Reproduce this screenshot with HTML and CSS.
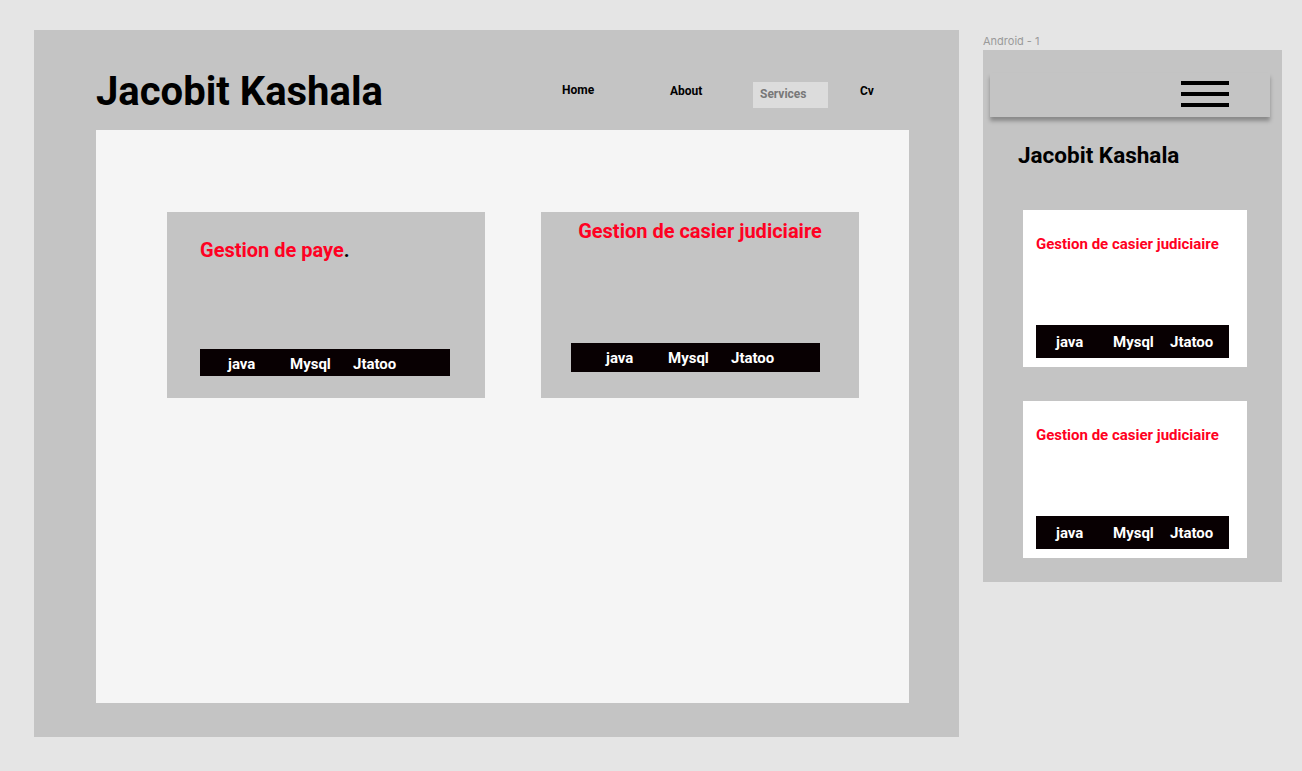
FILE: index.html
```html
<!DOCTYPE html>
<html>

<head lang="fr">
    <meta charset="UTF-8">
    <title>Jacobit Kashala</title>
    <link rel="stylesheet" href="styles.css">
</head>

<body>
    <div class="desktop">
        <header class="header">
            <h1 class="title">Jacobit Kashala</h1>
            <nav class="nav">
                <a class="nav-home" href="#">Home</a>
                <a class="nav-about" href="#">About</a>
                <a class="nav-services" href="#">Services</a>
                <a class="nav-cv" href="#">Cv</a>
            </nav>
        </header>
        <div class="panel">
            <div class="card card-left">
                <h2 class="card-title"><span class="red">Gestion de paye</span>.</h2>
                <div class="tags">
                    <span class="tag-java">java</span>
                    <span class="tag-mysql">Mysql</span>
                    <span>Jtatoo</span>
                </div>
            </div>
            <div class="card card-right">
                <h2 class="card-title"><span class="red">Gestion de casier judiciaire</span></h2>
                <div class="tags">
                    <span class="tag-java">java</span>
                    <span class="tag-mysql">Mysql</span>
                    <span>Jtatoo</span>
                </div>
            </div>
        </div>
    </div>

    <div class="android">
        <p class="frame-label">Android - 1</p>
        <div class="phone">
            <div class="appbar">
                <div class="burger">
                    <span></span>
                    <span></span>
                    <span></span>
                </div>
            </div>
            <h1 class="phone-title">Jacobit Kashala</h1>
            <div class="m-card">
                <h2 class="m-card-title">Gestion de casier judiciaire</h2>
                <div class="m-tags">
                    <span class="m-tag">java</span>
                    <span class="m-tag">Mysql</span>
                    <span>Jtatoo</span>
                </div>
            </div>
            <div class="m-card">
                <h2 class="m-card-title">Gestion de casier judiciaire</h2>
                <div class="m-tags">
                    <span class="m-tag">java</span>
                    <span class="m-tag">Mysql</span>
                    <span>Jtatoo</span>
                </div>
            </div>
        </div>
    </div>
</body>

</html>
```

FILE: styles.css
```css
body {
    margin: 0;
    padding: 30px 0 0 34px;
    background-color: #e5e5e5;
    font-family: Roboto, "Liberation Sans", sans-serif;
    display: flex;
    align-items: flex-start;
}

h1,
h2,
p {
    margin: 0;
}

a {
    text-decoration: none;
    color: #000;
}

/* desktop frame */

.desktop {
    width: 925px;
    height: 707px;
    box-sizing: border-box;
    padding: 0 50px 34px 62px;
    background-color: #c4c4c4;
    display: flex;
    flex-direction: column;
}

.header {
    height: 100px;
    display: flex;
    align-items: flex-start;
}

.title {
    margin-top: 42px;
    font-size: 40px;
    line-height: 40px;
    font-weight: 700;
    color: #000;
}

.nav {
    margin-left: auto;
    margin-right: 35px;
    margin-top: 52px;
    display: flex;
    align-items: flex-start;
    font-size: 12px;
    line-height: 14px;
    font-weight: 700;
}

.nav-home {
    width: 108px;
    padding-top: 1px;
}

.nav-about {
    width: 83px;
    padding-top: 2px;
}

.nav-services {
    width: 75px;
    box-sizing: border-box;
    padding: 5px 7px 7px;
    background-color: #dcdcdc;
    color: #787878;
    margin-right: 32px;
}

.nav-cv {
    width: 14px;
    padding-top: 2px;
}

.panel {
    flex: 1;
    background-color: #f5f5f5;
    padding: 82px 0 0 71px;
    display: flex;
    align-items: flex-start;
    gap: 56px;
}

.card {
    width: 318px;
    height: 186px;
    box-sizing: border-box;
    background-color: #c4c4c4;
    display: flex;
    flex-direction: column;
}

.card-title {
    font-size: 20px;
    line-height: 24px;
    font-weight: 700;
    color: #000;
}

.red {
    color: #ff0022;
}

.card-left {
    padding: 26px 35px 22px 33px;
}

.card-right {
    padding: 7px 0 26px 0;
}

.card-right .card-title {
    text-align: center;
}

.tags {
    margin-top: auto;
    box-sizing: border-box;
    background-color: #080002;
    color: #fff;
    font-size: 15px;
    line-height: 18px;
    font-weight: 700;
    display: flex;
}

.card-left .tags {
    height: 27px;
    padding: 6px 0 0 28px;
}

.card-right .tags {
    margin-left: 30px;
    width: 249px;
    height: 29px;
    padding: 6px 0 0 35px;
}

.tag-java {
    width: 62px;
}

.tag-mysql {
    width: 63px;
}

/* android frame */

.android {
    margin-left: 24px;
    width: 299px;
}

.frame-label {
    margin-top: 5px;
    height: 13px;
    font-family: Inter, "Liberation Sans", sans-serif;
    font-size: 11px;
    line-height: 13px;
    color: #9a9a9a;
}

.phone {
    margin-top: 2px;
    height: 532px;
    background-color: #c4c4c4;
    display: flex;
    flex-direction: column;
}

.appbar {
    margin: 23px 0 0 7px;
    width: 280px;
    height: 44px;
    box-sizing: border-box;
    background-color: #c4c4c4;
    box-shadow: 0 4px 4px rgba(0, 0, 0, 0.3);
    padding: 8px 0 0 191px;
}

.burger {
    width: 48px;
    display: flex;
    flex-direction: column;
    gap: 7px;
}

.burger span {
    height: 4px;
    background-color: #000;
}

.phone-title {
    margin: 25px 0 0 35px;
    font-size: 22.5px;
    line-height: 26px;
    font-weight: 700;
    color: #000;
}

.m-card {
    margin: 42px 0 0 40px;
    width: 224px;
    height: 157px;
    box-sizing: border-box;
    background-color: #fff;
    padding: 25px 18px 9px 13px;
    display: flex;
    flex-direction: column;
}

.m-card + .m-card {
    margin-top: 34px;
}

.m-card-title {
    font-size: 15px;
    line-height: 18px;
    font-weight: 700;
    color: #ff0022;
}

.m-tags {
    margin-top: auto;
    height: 33px;
    box-sizing: border-box;
    padding: 8px 0 0 20px;
    background-color: #080002;
    color: #fff;
    font-size: 15px;
    line-height: 18px;
    font-weight: 700;
    display: flex;
}

.m-tag {
    width: 57px;
}
```
